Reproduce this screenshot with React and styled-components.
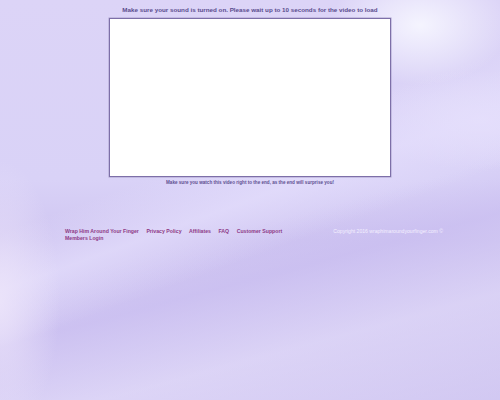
import React from 'react';
import styled, { createGlobalStyle } from 'styled-components';

const GlobalStyle = createGlobalStyle`
  html, body {
    margin: 0;
    padding: 0;
  }
  body {
    font-family: "Liberation Sans", Arial, sans-serif;
  }
`;

const links = [
  'Wrap Him Around Your Finger',
  'Privacy Policy',
  'Affiliates',
  'FAQ',
  'Customer Support',
];

export default function App() {
  return (
    <Page>
      <GlobalStyle />
      <Notice>Make sure your sound is turned on. Please wait up to 10 seconds for the video to load</Notice>
      <VideoFrame />
      <Caption>Make sure you watch this video right to the end, as the end will surprise you!</Caption>

      <Footer>
        <LinkBlock>
          <LinkRow>
            {links.map(l => (
              <FooterLink key={l} href="#">{l}</FooterLink>
            ))}
          </LinkRow>
          <LinkRow>
            <FooterLink href="#">Members Login</FooterLink>
          </LinkRow>
        </LinkBlock>
        <Copyright>Copyright 2016 wraphimaroundyourfinger.com ©</Copyright>
      </Footer>
    </Page>
  );
}

const Page = styled.div`
  width: 500px;
  height: 400px;
  overflow: hidden;
  box-sizing: border-box;
  padding-top: 6px;
  background-color: #d5cdf4;
  background-image:
    radial-gradient(ellipse 90px 60px at 420px 25px, rgba(246, 246, 255, 0.95), rgba(246, 246, 255, 0) 100%),
    radial-gradient(ellipse 60px 140px at 0px 300px, rgba(236, 228, 250, 0.9), rgba(236, 228, 250, 0) 100%),
    linear-gradient(160deg, rgba(230, 224, 252, 0) 0%, rgba(230, 224, 252, 0) 40%, rgba(228, 222, 252, 0.7) 50%, rgba(228, 222, 252, 0) 60%),
    linear-gradient(165deg, rgba(255, 255, 255, 0) 55%, rgba(200, 188, 240, 0.6) 65%, rgba(230, 224, 250, 0.4) 80%, rgba(205, 195, 240, 0.5) 100%),
    radial-gradient(ellipse 120px 50px at 480px 120px, rgba(232, 226, 252, 0.8), rgba(232, 226, 252, 0) 100%),
    linear-gradient(180deg, #dcd4f7 0%, #d9d2f7 45%, #cfc5f1 60%, #d6cdf4 100%);
`;

const Notice = styled.div`
  text-align: center;
  font-size: 6.25px;
  font-weight: bold;
  color: #5a4c8e;
  line-height: 7px;
`;

const VideoFrame = styled.div`
  box-sizing: border-box;
  width: 282px;
  height: 159px;
  margin: 5px auto 0;
  background: #ffffff;
  border: 1px solid #7d6fa8;
  box-shadow: 0 0 0 0.5px #a99fcc;
`;

const Caption = styled.div`
  text-align: center;
  font-size: 4.6px;
  font-weight: bold;
  color: #5e5090;
  margin-top: 3px;
  line-height: 5px;
`;

const Footer = styled.div`
  display: flex;
  justify-content: space-between;
  align-items: flex-start;
  width: 378px;
  margin: 43px auto 0;
  padding-left: 8px;
`;

const LinkBlock = styled.div`
  display: flex;
  flex-direction: column;
`;

const LinkRow = styled.div`
  display: flex;
  gap: 7.5px;
  line-height: 7px;
`;

const FooterLink = styled.a`
  font-size: 5.2px;
  font-weight: bold;
  color: #8e3a86;
  text-decoration: none;
`;

const Copyright = styled.div`
  font-size: 5.1px;
  color: #f4f0ff;
  line-height: 7px;
`;
